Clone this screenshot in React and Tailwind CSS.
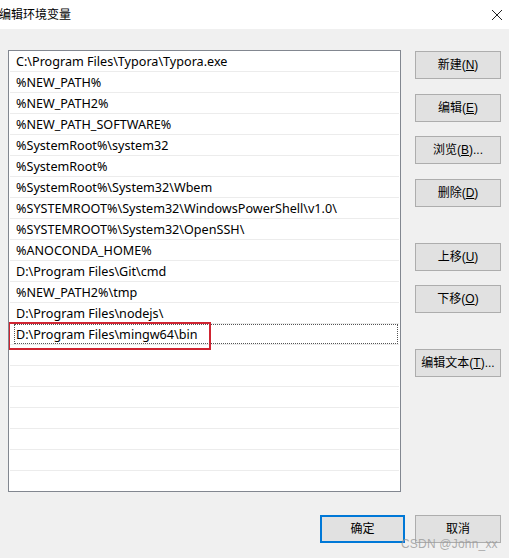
const paths = [
  'C:\\Program Files\\Typora\\Typora.exe',
  '%NEW_PATH%',
  '%NEW_PATH2%',
  '%NEW_PATH_SOFTWARE%',
  '%SystemRoot%\\system32',
  '%SystemRoot%',
  '%SystemRoot%\\System32\\Wbem',
  '%SYSTEMROOT%\\System32\\WindowsPowerShell\\v1.0\\',
  '%SYSTEMROOT%\\System32\\OpenSSH\\',
  '%ANOCONDA_HOME%',
  'D:\\Program Files\\Git\\cmd',
  '%NEW_PATH2%\\tmp',
  'D:\\Program Files\\nodejs\\',
  'D:\\Program Files\\mingw64\\bin',
  '', '', '', '', '', '', '',
];

const font = { fontFamily: '"Segoe UI", "Liberation Sans", "Noto Sans CJK SC", sans-serif' };
const listFont = { fontFamily: '"Noto Sans", "Liberation Sans", sans-serif' };

const Btn = ({ label, hot, tail = '', className = '' }) => (
  <button
    className={`h-[28px] w-[86px] bg-[#e1e1e1] border border-[#adadad] text-[12px] text-black flex items-center justify-center ${className}`}
  >
    {label}(<span className="underline">{hot}</span>){tail}
  </button>
);

export default function App() {
  return (
    <div className="w-[509px] h-[558px] bg-[#f0f0f0] flex flex-col overflow-hidden relative" style={font}>
      {/* title bar */}
      <div className="h-[29px] bg-white flex items-center justify-between shrink-0">
        <span className="text-[12px] text-black -ml-[1px]">编辑环境变量</span>
        <svg width="12" height="12" viewBox="0 0 12 12" className="mr-[6px]">
          <path d="M1 1L11 11M11 1L1 11" stroke="#222" strokeWidth="1" />
        </svg>
      </div>

      <div className="flex pt-[21px] pl-[8px]">
        {/* list */}
        <div className="w-[393px] h-[442px] bg-white border border-[#828790] overflow-hidden" style={listFont}>
          {paths.map((p, i) => {
            const sel = i === 13;
            return (
              <div key={i} className="h-[21px] relative border-b border-[#ececec] mx-[1px]">
                <div
                  className={`h-[20px] flex items-center pt-[2px] text-[12.6px] text-black whitespace-nowrap ${sel ? 'border border-dotted border-[#555] ml-[4px] pl-[1px] mr-[1px]' : 'pl-[6px]'}`}
                >
                  {p}
                </div>
                {sel && (
                  <div className="absolute left-[-2px] top-[-2px] w-[203px] h-[28px] border-2 border-[#cf2431]" />
                )}
              </div>
            );
          })}
        </div>

        {/* side buttons */}
        <div className="flex flex-col ml-[14px] pt-[1px]">
          <Btn label="新建" hot="N" />
          <Btn label="编辑" hot="E" className="mt-[15px]" />
          <Btn label="浏览" hot="B" tail="..." className="mt-[14px]" />
          <Btn label="删除" hot="D" className="mt-[15px]" />
          <Btn label="上移" hot="U" className="mt-[36px]" />
          <Btn label="下移" hot="O" className="mt-[14px]" />
          <Btn label="编辑文本" hot="T" tail="..." className="mt-[36px]" />
        </div>
      </div>

      {/* bottom buttons */}
      <div className="flex justify-end gap-[10px] pr-[8px] mt-[23px]">
        <button className="h-[28px] w-[85px] bg-[#e1e1e1] border-2 border-[#0078d7] text-[12px] text-black">确定</button>
        <button className="h-[28px] w-[86px] bg-[#e1e1e1] border border-[#adadad] text-[12px] text-black">取消</button>
      </div>

      <span className="absolute left-[401px] top-[535px] text-[12px] text-[#9a9a9a]/80 tracking-[0.2px]">CSDN @John_xx</span>
    </div>
  );
}
